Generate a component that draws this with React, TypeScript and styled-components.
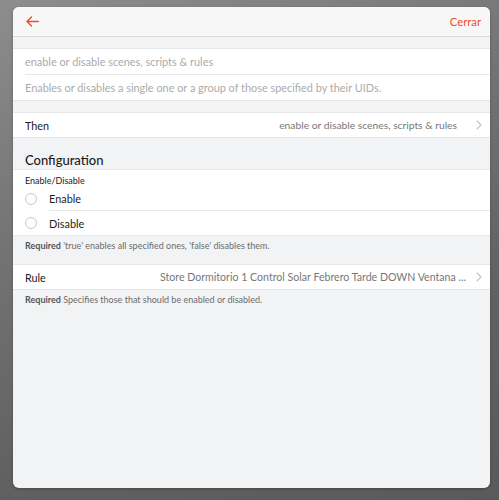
import React from "react";
import styled, { createGlobalStyle } from "styled-components";

const Global = createGlobalStyle`
  html, body { margin: 0; padding: 0; }
  body {
    width: 499px;
    height: 500px;
    overflow: hidden;
    background: linear-gradient(160deg, #8d8d8d 0%, #747474 35%, #616161 70%, #5a5a5a 100%);
    font-family: "Lato", "Open Sans", sans-serif;
    -webkit-font-smoothing: antialiased;
  }
`;

const Backdrop = styled.div`
  width: 499px;
  height: 500px;
  box-sizing: border-box;
  padding: 7px 9px 12px 13px;
  display: flex;
`;

const Sheet = styled.div`
  flex: 1;
  background: #f2f3f5;
  border-radius: 6px;
  overflow: hidden;
  display: flex;
  flex-direction: column;
  box-shadow: 0 1px 3px rgba(0, 0, 0, 0.25);
`;

const Header = styled.div`
  height: 29px;
  background: #f7f7f8;
  border-bottom: 1px solid #d9d9db;
  display: flex;
  align-items: center;
  justify-content: space-between;
  padding: 0 9px 0 13px;
  flex-shrink: 0;
`;

const BackButton = styled.button`
  border: 0;
  background: none;
  padding: 0;
  display: flex;
  align-items: center;
  cursor: pointer;
`;

const CloseLink = styled.span`
  color: #e8502a;
  font-size: 11.3px;
  line-height: 14px;
`;

const Gap = styled.div<{ h: number }>`
  height: ${(p) => p.h}px;
  flex-shrink: 0;
`;

const Block = styled.div`
  background: #ffffff;
  border-top: 1px solid #e6e6e8;
  border-bottom: 1px solid #e6e6e8;
  flex-shrink: 0;
`;

const InputRow = styled.div<{ last?: boolean }>`
  margin-left: 12px;
  height: 25px;
  display: flex;
  align-items: center;
  color: #ababab;
  font-size: 10.9px;
  border-bottom: ${(p) => (p.last ? "none" : "1px solid #e8e8ea")};
`;

const ItemRow = styled.div`
  height: 24px;
  display: flex;
  align-items: center;
  padding: 0 8px 0 12px;
  font-size: 10.8px;
  color: #222;
`;

const ItemTitle = styled.span`
  flex-shrink: 0;
`;

const ItemValue = styled.span<{ trail: number; size: number }>`
  flex: 1;
  text-align: right;
  color: #777;
  font-size: ${(p) => p.size}px;
  white-space: nowrap;
  overflow: hidden;
  margin-left: 16px;
  padding-right: ${(p) => p.trail}px;
`;

const Chevron = styled.span`
  display: flex;
  align-items: center;
`;

const SectionTitle = styled.div`
  font-size: 13px;
  line-height: 16px;
  font-weight: 500;
  color: #1c1c1c;
  padding: 14px 12px 1px;
`;

const FieldLabel = styled.div`
  font-size: 9px;
  line-height: 12px;
  color: #222;
  padding: 5px 12px 0;
`;

const RadioRow = styled.label`
  display: flex;
  align-items: center;
  height: 24px;
  padding-left: 12px;
  font-size: 10.9px;
  color: #1f1f1f;
`;

const RadioCircle = styled.span`
  width: 10px;
  height: 10px;
  border: 1px solid #c9c9c9;
  border-radius: 50%;
  flex-shrink: 0;
  margin-right: 12px;
`;

const RadioText = styled.span<{ last?: boolean }>`
  flex: 1;
  align-self: stretch;
  display: flex;
  align-items: center;
  border-bottom: ${(p) => (p.last ? "none" : "1px solid #e8e8ea")};
`;

const Hint = styled.div`
  font-size: 9px;
  line-height: 11px;
  color: #6c6c6c;
  padding: 4px 12px 0;
  b {
    color: #555;
    font-weight: 700;
  }
`;

const ArrowIcon = () => (
  <svg width="13" height="11" viewBox="0 0 13 11" fill="none">
    <path d="M12.3 5.5H1M5.5 1L1 5.5l4.5 4.5" stroke="#e8502a" strokeWidth="1.4" strokeLinecap="round" strokeLinejoin="round" />
  </svg>
);

const ChevronIcon = () => (
  <svg width="6" height="10" viewBox="0 0 6 10" fill="none">
    <path d="M1 1l4 4-4 4" stroke="#c4c4c4" strokeWidth="1.1" strokeLinecap="round" strokeLinejoin="round" />
  </svg>
);

export default function App() {
  return (
    <>
      <Global />
      <Backdrop>
        <Sheet>
          <Header>
            <BackButton aria-label="Back">
              <ArrowIcon />
            </BackButton>
            <CloseLink>Cerrar</CloseLink>
          </Header>
          <Gap h={11} />
          <Block>
            <InputRow>enable or disable scenes, scripts &amp; rules</InputRow>
            <InputRow last>Enables or disables a single one or a group of those specified by their UIDs.</InputRow>
          </Block>
          <Gap h={11} />
          <Block>
            <ItemRow>
              <ItemTitle>Then</ItemTitle>
              <ItemValue trail={19} size={10.3}>enable or disable scenes, scripts &amp; rules</ItemValue>
              <Chevron>
                <ChevronIcon />
              </Chevron>
            </ItemRow>
          </Block>
          <SectionTitle>Configuration</SectionTitle>
          <Block>
            <FieldLabel>Enable/Disable</FieldLabel>
            <RadioRow>
              <RadioCircle />
              <RadioText>Enable</RadioText>
            </RadioRow>
            <RadioRow>
              <RadioCircle />
              <RadioText last>Disable</RadioText>
            </RadioRow>
          </Block>
          <Hint>
            <b>Required</b> 'true' enables all specified ones, 'false' disables them.
          </Hint>
          <Gap h={13} />
          <Block>
            <ItemRow>
              <ItemTitle>Rule</ItemTitle>
              <ItemValue trail={10} size={10.6}>Store Dormitorio 1 Control Solar Febrero Tarde DOWN Ventana ...</ItemValue>
              <Chevron>
                <ChevronIcon />
              </Chevron>
            </ItemRow>
          </Block>
          <Hint>
            <b>Required</b> Specifies those that should be enabled or disabled.
          </Hint>
        </Sheet>
      </Backdrop>
    </>
  );
}
